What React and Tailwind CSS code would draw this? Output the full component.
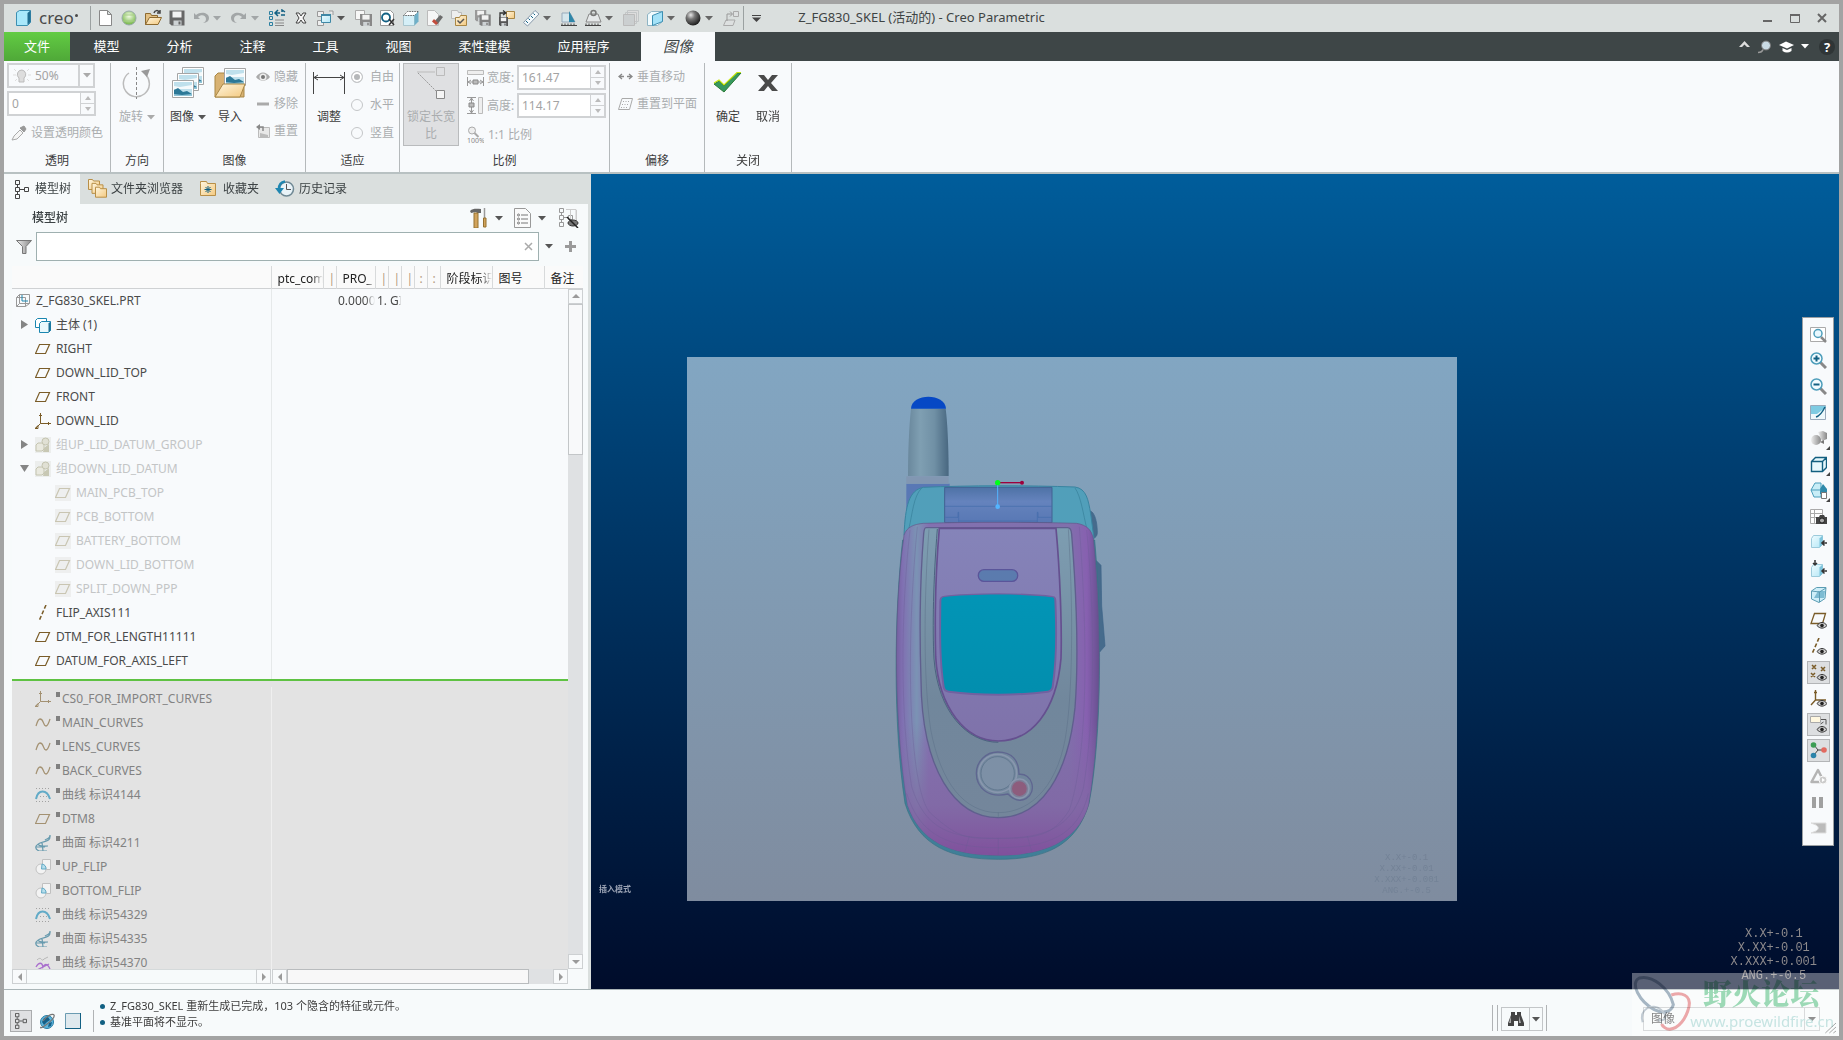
import React, { useState } from "react";

/* ---------- small shared pieces ---------- */

const Svg = ({ w = 18, h = 18, box, children, className = "" }) => (
  <svg width={w} height={h} viewBox={box || `0 0 ${w} ${h}`} fill="none" className={`shrink-0 ${className}`} aria-hidden="true">
    {children}
  </svg>
);

const Caret = ({ color = "#555" }) => (
  <Svg w={8} h={5}><path d="M0 0h8L4 4.500z" fill={color} /></Svg>
);

const Arrow = ({ dir = "up", color = "#9a9a9a" }) => {
  const d = {
    up: "M0 6h8L4 2z",
    down: "M0 2h8L4 6z",
    left: "M6 0v8L2 4z",
    right: "M2 0v8l4-4z",
  }[dir];
  return <Svg w={8} h={8}><path d={d} fill={color} /></Svg>;
};

const Defs = () => (
  <svg width="0" height="0" className="absolute" aria-hidden="true">
    <defs>
      <linearGradient id="ice" x1="0" y1="0" x2="1" y2="1"><stop stopColor="#effcff" /><stop offset="1" stopColor="#b3e6f6" /></linearGradient>
      <linearGradient id="fold" x1="0" y1="0" x2="1" y2="1"><stop stopColor="#fff6df" /><stop offset="1" stopColor="#f3c980" /></linearGradient>
      <radialGradient id="ball" cx=".35" cy=".3" r=".7"><stop stopColor="#e8e8e8" /><stop offset=".4" stopColor="#777" /><stop offset="1" stopColor="#222" /></radialGradient>
      <radialGradient id="green" cx=".5" cy=".35" r=".6"><stop stopColor="#f4fbe8" /><stop offset="1" stopColor="#79b94c" /></radialGradient>
      <linearGradient id="grey" x1="0" y1="0" x2="1" y2="0"><stop stopColor="#eee" /><stop offset="1" stopColor="#888" /></linearGradient>
    </defs>
  </svg>
);

/* ---------- quick access bar icons ---------- */

const Floppy = ({ x = 0, y = 0, s = 1, c = "#666" }) => (
  <g transform={`translate(${x} ${y}) scale(${s})`}>
    <path d="M0 0h15v15H2l-2-2z" fill={c} />
    <path d="M3 1h9v6H3z" fill="#f2f2f2" />
    <path d="M4 10h8v5H4z" fill="#cdd2d4" />
    <path d="M9 11h2v3H9z" fill={c} />
  </g>
);

const quick = {
  new: <path d="M3.500 1.500h8l4 4v11h-12zM11.500 1.500v4h4" fill="#fff" stroke="#888" />,
  online: <><circle cx="9" cy="9" r="7" fill="url(#green)" stroke="#9aa" /><path d="M3 6h12M3 12h12" stroke="#a7cf86" /></>,
  open: <><path d="M1.500 15.500v-11h5l1 2h6v9z" fill="#e2c084" stroke="#8d6a30" /><path d="M1.500 15.500l4-7h12l-3.500 7z" fill="url(#fold)" stroke="#8d6a30" /><path d="M10 4c1-3 4-3 5-1M16 1v3h-3" stroke="#444" strokeWidth="1.500" /></>,
  save: <Floppy x={1.500} y={1.500} />,
  undo: <path d="M2 4v6h6L6 8c3-3 8-2 8 2 0 2-1 3-3 4 4-.5 6-2 6-5 0-5-8-7-13-3z" fill="#a2a6a7" />,
  redo: <path d="M16 4v6h-6l2-2C9 5 4 6 4 10c0 2 1 3 3 4-4-.5-6-2-6-5 0-5 8-7 13-3z" fill="#a2a6a7" />,
  regen: <><path d="M1.500 2.500h3v3h-3zM1.500 7.500h3v3h-3zM1.500 13.500h3v3h-3z" stroke="#2a7fa0" /><path d="M7 11h9M7 14h9M7 16.500h9" stroke="#888" /><path d="M7 4h5M10 1L7 4l3 3M17 6h-4M14 3V1l3 2" stroke="#126083" strokeWidth="1.500" /></>,
  close: <path d="M4 4h3l2 3 2-3h3l-3 5 3 5h-3l-2-3-2 3H4l3-5z" fill="#f5f5f5" stroke="#444" />,
  windows: <><path d="M1.500 2.500h6v5h-6zM1.500 11.500h6v5h-6zM13 2h4v4" stroke="#999" fill="#eee" /><path d="M5.500 5.500h9v8h-9z" fill="url(#ice)" stroke="#3f88a6" /><path d="M5 5h10v2H5z" fill="#3f88a6" /></>,
  saveas: <><path d="M1.500 1.500h9v9h-9z" fill="#f7f7f7" stroke="#aaa" /><Floppy x={6} y={5} s={0.8} c="#888" /></>,
  find: <><path d="M2.500 1.500h10l3 3v12h-13z" fill="#fff" stroke="#999" /><circle cx="8" cy="8.500" r="4" stroke="#126083" strokeWidth="1.800" /><path d="M11 10l5 6M16 10l-5 6" stroke="#333" strokeWidth="1.500" /></>,
  erase3d: <><path d="M1.500 6.500h11v10h-11z" fill="#d5eff7" stroke="#a9c6cf" /><path d="M1.500 6.500l4-4h11l-4 4z" fill="#fff" stroke="#666" strokeDasharray="1.500 1" /><path d="M12.500 6.500v10l4-4v-10z" fill="#6fb0c8" /></>,
  eraser: <><path d="M1.500 1.500h7l4 4v11h-11z" fill="#f6f6f6" stroke="#bbb" /><path d="M8 13l6-7 3 2-6 8z" fill="#6b6b6b" /><path d="M6 12.500l4 3.500 2-2-4-4z" fill="#c24c3c" /></>,
  check: <><path d="M1.500 1.500h6l1 2h3v6h-10z" fill="#eee" stroke="#bbb" /><path d="M5.500 8.500h4l1-2h6v10h-11z" fill="url(#fold)" stroke="#a98745" /><path d="M7.500 11.500l2.500 2.500 4-4" stroke="#555" strokeWidth="1.500" /></>,
  copies: <><Floppy x={1} y={1} s={0.75} c="#999" /><Floppy x={5.500} y={5.500} s={0.75} c="#808080" /></>,
  backup: <><path d="M8.500 2.500h8v7h-8z" fill="url(#fold)" stroke="#a98745" /><Floppy x={1} y={8} s={0.6} c="#555" /><path d="M2 8V4h5M5 1.500L8 4 5 6" stroke="#333" strokeWidth="1.300" /></>,
  ruler: <><path d="M1.500 13.500L13 1.500l4 3.500L5.500 17z" fill="#f5fafc" stroke="#89a" /><path d="M4 12l2 2M6.500 9.500l1.500 1.500M9 7l2 2M11.500 4.500L13 6" stroke="#126083" /></>,
  angle: <><path d="M2 4h8l5 9H2z" fill="#d5e6ec" stroke="#9ab" /><path d="M9 2l6 11H9z" fill="#2f86a8" /><path d="M1 16.500h16M2 14.500v2M5 14.500v2M8 14.500v2M11 14.500v2M14 14.500v2" stroke="#444" /></>,
  mass: <><path d="M2 13L5 5h9l3 8z" fill="#e5e8e9" stroke="#888" /><circle cx="9.500" cy="4" r="2.500" stroke="#777" strokeWidth="1.500" /><path d="M1 16.500h16M2 14.500v2M5 14.500v2M8 14.500v2M11 14.500v2M14 14.500v2" stroke="#444" /></>,
  pics: <><path d="M5.500 1.500h11v11h-11zM3.500 3.500h11v11h-11z" fill="#ddd" stroke="#c2c6c7" /><path d="M1.500 5.500h11v11h-11z" fill="#cbcfd0" stroke="#bbb" /></>,
  cube: <><path d="M1.500 5.500l4-3h11v10l-5 4h-10z" fill="#f1fbfe" stroke="#8fb4c4" /><path d="M6.500 6.500l10-4v10l-10 4z" fill="#a4e2f8" stroke="#3d8fb2" /></>,
  shade: <circle cx="9" cy="9" r="7.500" fill="url(#ball)" />,
  move: <><path d="M11.500 2.500h5v5h-5zM4 11h9l-2 5.500H1.500z" fill="#dde0e0" stroke="#aaa" /><path d="M5 12V5h5M8 2.500L10.500 5 8 7.500" stroke="#999" /></>,
};

const quickBar = [
  ["new", "新建"], ["online", "在线"], ["open", "打开"], ["save", "保存"], ["undo", "撤消", "#a2a6a7"], ["redo", "重做", "#a2a6a7"],
  ["regen", "重新生成"], ["close", "关闭"], ["windows", "窗口", "#555"], ["saveas", "另存为"], ["find", "查找"], ["erase3d", "拭除"],
  ["eraser", "拭除未显示"], ["check", "检查"], ["copies", "副本"], ["backup", "备份"], ["ruler", "测量", "#666"], ["angle", "角度"],
  ["mass", "质量属性", "#666"], ["pics", "图片"], ["cube", "视图", "#666"], ["shade", "外观", "#666"], ["move", "移动"],
];

const TitleBar = () => (
  <header className="grid h-7 grid-cols-[1fr_auto_1fr] items-center bg-[#dadfde]">
    <div className="flex h-full items-center">
      <div className="flex w-[86px] items-center gap-2 pl-3">
        <Svg w={15} h={16}><path d="M.5 2.500l3-2h11v12l-3 3H.5z" fill="#a9e8fb" stroke="#3d8fb2" /><path d="M11.500 3v12l3-3V.5z" fill="#1f6d90" /></Svg>
        <span className="flex text-[17px] leading-6 text-[#4a4a4a]">creo<span className="mt-2 ml-px h-[3px] w-[3px] rounded-full bg-[#4a4a4a]" /></span>
      </div>
      <span className="mr-[2px] h-6 w-px bg-[#9ba1a1]" />
      {quickBar.map(([id, label, caret]) => (
        <React.Fragment key={id}>
          <button aria-label={label} className="flex h-6 w-6 items-center justify-center"><Svg>{quick[id]}</Svg></button>
          {caret && <button aria-label={`${label}选项`} className="flex h-6 w-[14px] items-center"><Caret color={caret} /></button>}
        </React.Fragment>
      ))}
      <span className="h-6 w-px bg-[#9ba1a1]" />
      <button aria-label="自定义" className="ml-2 flex h-6 items-center"><Svg w={9} h={7}><path d="M0 .5h9" stroke="#444" /><path d="M0 2.500h9L4.500 7z" fill="#444" /></Svg></button>
    </div>
    <h1 className="whitespace-nowrap text-[13px] text-[#3e4444]">Z_FG830_SKEL (活动的) - Creo Parametric</h1>
    <div className="flex items-center justify-end gap-[17px] pr-3">
      <button aria-label="最小化"><Svg w={10} h={10}><path d="M0 8h9" stroke="#666" strokeWidth="2" /></Svg></button>
      <button aria-label="最大化"><Svg w={10} h={10}><path d="M.5 1.500h9v8h-9z" stroke="#666" /><path d="M0 2h10" stroke="#666" strokeWidth="2" /></Svg></button>
      <button aria-label="关闭"><Svg w={10} h={10}><path d="M1 1l8 8M9 1L1 9" stroke="#666" strokeWidth="2" /></Svg></button>
    </div>
  </header>
);

const MenuBar = () => (
  <nav className="flex h-[29px] bg-[#3e4647] text-[13px] text-white">
    <button className="w-[66px] bg-gradient-to-b from-[#62cc43] to-[#4fa838]">文件</button>
    {["模型", "分析", "注释", "工具", "视图"].map((t) => <button key={t} className="w-[73px]">{t}</button>)}
    {["柔性建模", "应用程序"].map((t) => <button key={t} className="w-[99px]">{t}</button>)}
    <button className="ml-2 w-[74px] bg-[#f8fafc] text-[15px] italic text-[#3e4647]">图像</button>
    <div className="ml-auto flex items-center gap-[6px] pr-1">
      <button aria-label="折叠功能区"><Svg w={11} h={7} className="mb-1"><path d="M0 6h3l2.500-2.500L8 6h3L5.500 0z" fill="#ddd" /></Svg></button>
      <button aria-label="搜索"><Svg w={17} h={16}><circle cx="10" cy="6.500" r="4.500" fill="#c9dbe5" stroke="#777" /><path d="M7 10.500c-1 3-3 3-5 3" stroke="#999" strokeWidth="1.500" /></Svg></button>
      <button aria-label="学习"><Svg w={16} h={14}><path d="M0 5l7-3.500L15 5 8 8.500z" fill="#fff" /><path d="M3.500 8v3c3 2 6 2 9 0V8L8 10z" fill="#fff" /></Svg></button>
      <button aria-label="学习选项"><Caret color="#fff" /></button>
      <button aria-label="帮助" className="ml-1 w-4 rounded-full bg-[#2f3536] text-center text-[13px] font-bold leading-4">?</button>
    </div>
  </nav>
);

/* ---------- ribbon ---------- */

const Group = ({ label, className, children }) => (
  <section className={`flex flex-col border-r border-[#b5b9bb] ${className}`}>
    <div className="flex flex-1 items-start">{children}</div>
    <div className="h-[21px] text-center text-xs leading-5 text-[#3c3c3c]">{label}</div>
  </section>
);

const Spin = ({ id, value, label }) => (
  <div className="flex h-[25px] w-[89px] border-2 border-[#d0d2d4] bg-white">
    <input id={id} aria-label={label} defaultValue={value} disabled className="min-w-0 flex-1 px-[3px] text-xs text-[#a3a3a3]" />
    <div className="flex w-[14px] flex-col divide-y divide-[#d0d2d4] border-l border-[#d0d2d4] bg-[#f8fafc]">
      <button aria-label="增大" className="flex flex-1 items-center justify-center"><Svg w={6} h={4}><path d="M0 4h6L3 0z" fill="#bbb" /></Svg></button>
      <button aria-label="减小" className="flex flex-1 items-center justify-center"><Svg w={6} h={4}><path d="M0 0h6L3 4z" fill="#bbb" /></Svg></button>
    </div>
  </div>
);

const SmallButton = ({ icon, children }) => (
  <button className="flex h-[27px] items-center gap-1 whitespace-nowrap text-xs text-[#aaadaf]">{icon}{children}</button>
);

const BigButton = ({ icon, children, muted, caret }) => (
  <button className={`flex flex-col items-center text-xs ${muted ? "text-[#aaadaf]" : "text-[#3c3c3c]"}`}>
    <span className="flex h-[40px] w-[36px] items-center justify-center">{icon}</span>
    <span className="flex items-center gap-1 pt-1 leading-5">{children}{caret && <Caret color={muted ? "#aaa" : "#555"} />}</span>
  </button>
);

const Photo = ({ x, y }) => (
  <g transform={`translate(${x} ${y})`}>
    <path d="M.5.5h21v17H.5z" fill="#fff" stroke="#a5a5a5" />
    <path d="M2 2h18v14H2z" fill="#bfe0ec" />
    <path d="M2 6l6 1 12-2v4H2z" fill="#f5fafc" />
    <path d="M2 10l4-2 5 4 4-1 5 3v2H2z" fill="#2c7897" />
    <path d="M2 14l8 1 10-1v2H2z" fill="#8fc3d6" />
  </g>
);

const Ribbon = () => {
  const [fit, setFit] = useState("自由");
  return (
    <div className="flex h-[113px] border-b-2 border-[#b8c1c2] bg-[#f8fafc] pt-[2px]">
      <Group label="透明" className="w-[107px]">
        <div className="flex flex-col gap-[3px] pl-[3px]">
          <div className="relative flex h-[25px] w-[88px] items-center border-2 border-[#d0d2d4]">
            <Svg w={18} h={18} className="ml-1"><path d="M9 3a4.500 4.500 0 0 0-3 8v4h5v-4a4.500 4.500 0 0 0-2-8z" fill="#ddd" stroke="#bbb" /><path d="M1 2l2 2M16 2l-2 2M0 8h3M15 8h3M2 14l2-2M16 14l-2-2" stroke="#ddd" /></Svg>
            <select aria-label="透明度" disabled className="h-full flex-1 appearance-none pl-1 text-xs text-[#a3a3a3] opacity-100"><option>50%</option></select>
            <span className="pointer-events-none absolute right-0 flex h-full w-[15px] items-center justify-center border-l-2 border-[#d0d2d4]"><Caret color="#aaa" /></span>
          </div>
          <Spin value="0" label="旋转角度" />
          <SmallButton icon={<Svg w={16} h={16} className="ml-1"><path d="M1 15l2-4 6-6 3 3-6 6z" fill="#f5f5f5" stroke="#aaa" /><path d="M9 3l4 4 2-3-2-3z" fill="#999" stroke="#999" /></Svg>}>设置透明颜色</SmallButton>
        </div>
      </Group>
      <Group label="方向" className="w-[53px]">
        <div className="flex flex-1 justify-center">
          <BigButton muted caret icon={<Svg w={30} h={32}><path d="M7 6a13 13 0 1 0 17 2" stroke="#bbb" strokeWidth="1.500" /><path d="M14.500 0v32" stroke="#888" strokeDasharray="3 2" /><path d="M19 4l9-2-3 8z" fill="#999" /></Svg>}>旋转</BigButton>
        </div>
      </Group>
      <Group label="图像" className="w-[142px]">
        <div className="ml-[6px] flex gap-[6px]">
          <BigButton caret icon={<Svg w={32} h={32}><Photo x={10} y={0} /><Photo x={5} y={6} /><Photo x={0} y={13} /></Svg>}>图像</BigButton>
          <BigButton icon={<Svg w={32} h={32}><path d="M1 30V9l3-3h6l2 4h18v20z" fill="#d8b273" stroke="#a98745" /><Photo x={10} y={1} /><path d="M1 30l8-13h22l-5 13z" fill="url(#fold)" stroke="#a98745" /></Svg>}>导入</BigButton>
        </div>
        <div className="ml-2 flex flex-col">
          <SmallButton icon={<Svg w={14} h={14}><path d="M0 7c4-6 10-6 14 0-4 5-10 5-14 0z" fill="#aaa" /><circle cx="7" cy="7" r="3.500" fill="#eee" /><circle cx="7" cy="7" r="2" fill="#777" /></Svg>}>隐藏</SmallButton>
          <SmallButton icon={<Svg w={14} h={14}><path d="M1 7h12" stroke="#aaa" strokeWidth="3" /></Svg>}>移除</SmallButton>
          <SmallButton icon={<Svg w={14} h={14}><path d="M2.500 3.500h11v10h-11z" fill="#e8e8e8" stroke="#bbb" /><path d="M4 9l8 2v2H4z" fill="#bbb" /><path d="M0 3l4-3v6z" fill="#888" /><path d="M3 3h4v4" stroke="#888" strokeWidth="1.500" /></Svg>}>重置</SmallButton>
        </div>
      </Group>
      <Group label="适应" className="w-[94px]">
        <div className="ml-[5px]">
          <BigButton icon={<Svg w={34} h={24}><path d="M1.500 1v22M32.500 1v22M2 6.500h30M6 4L2 6.500 6 9M28 4l4 2.500L28 9" stroke="#444" /></Svg>}>调整</BigButton>
        </div>
        <fieldset className="ml-1 flex flex-col">
          {["自由", "水平", "竖直"].map((t) => (
            <label key={t} className="flex h-[28px] items-center gap-[7px] text-xs text-[#aaadaf]">
              <input type="radio" name="fit" checked={fit === t} onChange={() => setFit(t)} className="h-3 w-3 appearance-none rounded-full border border-[#c4c6c8] checked:bg-[#b5b7b9] checked:shadow-[inset_0_0_0_2px_white]" />
              {t}
            </label>
          ))}
        </fieldset>
      </Group>
      <Group label="比例" className="w-[210px]">
        <button aria-pressed="true" className="ml-[3px] flex h-[83px] w-[56px] flex-col items-center border border-[#b9bbbd] bg-[#dfe0e2] text-xs leading-[17px] text-[#aaadaf]">
          <Svg w={30} h={34} className="mt-[3px] mb-[7px]"><path d="M1 5h18" stroke="#bbb" /><path d="M2 6l18 18" stroke="#999" strokeDasharray="2 1" /><path d="M20.500.5h8v8h-8z" stroke="#bbb" /><path d="M20.500 23.500h8v8h-8z" fill="#f5f5f5" stroke="#888" /></Svg>
          锁定长宽比
        </button>
        <div className="ml-2 flex flex-col gap-[3px] pt-[2px] text-xs whitespace-nowrap text-[#aaadaf]">
          <div className="flex h-[25px] items-center gap-[3px]">
            <Svg w={17} h={17}><path d="M.5 1.500h16v4H.5z" fill="#eee" stroke="#bbb" /><path d="M.5 8v9M16.500 8v9M1 13h15M4 11l-3 2 3 2M13 11l3 2-3 2" stroke="#999" /><path d="M6 11h5v4H6z" fill="#bbb" stroke="#888" /></Svg>
            <label htmlFor="width" className="w-[27px]">宽度:</label>
            <Spin id="width" label="宽度" value="161.47" />
          </div>
          <div className="flex h-[25px] items-center gap-[3px]">
            <Svg w={17} h={17}><path d="M11.500.5h4v16h-4z" fill="#eee" stroke="#bbb" /><path d="M0 .5h9M0 16.500h9M4.500 1v15M2.500 4l2-3 2 3M2.500 13l2 3 2-3" stroke="#999" /><path d="M2 6h5v4H2z" fill="#bbb" stroke="#888" /></Svg>
            <label htmlFor="height" className="w-[27px]">高度:</label>
            <Spin id="height" label="高度" value="114.17" />
          </div>
          <SmallButton icon={<Svg w={17} h={18}><circle cx="5" cy="4.500" r="3.500" fill="#eee" stroke="#aaa" /><path d="M7.500 7l4 4" stroke="#aaa" strokeWidth="2" /><text x="0" y="17" fontSize="7" fill="#888">100%</text></Svg>}>1:1 比例</SmallButton>
        </div>
      </Group>
      <Group label="偏移" className="w-[95px]">
        <div className="ml-2 flex flex-col">
          <SmallButton icon={<Svg w={15} h={14}><path d="M1 6.500h5M9 6.500h5M4 4L1 6.500 4 9M11 4l3 2.500L11 9" stroke="#888" strokeWidth="1.300" /></Svg>}>垂直移动</SmallButton>
          <SmallButton icon={<Svg w={15} h={14}><path d="M4 1.500h10.500l-3 11H.5z" stroke="#aaa" /><path d="M5 4.500h7M4 7.500h7M3 10.500h7" stroke="#aaa" strokeDasharray="1 1.500" /></Svg>}>重置到平面</SmallButton>
        </div>
      </Group>
      <Group label="关闭" className="w-[87px]">
        <div className="ml-[5px] flex gap-1">
          <BigButton icon={<Svg w={30} h={22}><path d="M1 12l5-3 5 5L24 1h4L11 20z" fill="#37985f" stroke="#2a7a35" /><path d="M1 11l5-3 5 5L24 .5h4" stroke="#c5e60f" strokeWidth="1.200" /></Svg>}>确定</BigButton>
          <BigButton icon={<Svg w={20} h={16}><path d="M0 0h6l4 5 4-5h6l-7 8 7 8h-6l-4-5-4 5H0l7-8z" fill="#4a4a4a" /></Svg>}>取消</BigButton>
        </div>
      </Group>
    </div>
  );
};

/* ---------- model tree ---------- */

const Plane = ({ c = "#7a5c28" }) => <path d="M4.500 3.500h10l-4 9h-10z" stroke={c} strokeWidth="1.200" />;

const treeIcons = {
  part: <><path d="M.5 4.500h9v9h-9zM3.500 1.500h10v9h-10zM.5 4.500l3-3M9.500 13.500l4-3M.5 13.500l3-3" stroke="#999" /><path d="M6 2v6h6" stroke="#1a86b0" /></>,
  body: <><path d="M.5 3.500l2-2h9v9h-11z" fill="#fff" stroke="#1a86b0" /><path d="M4.500 6.500l2-2h9v9l-2 2h-9z" fill="#e9f9fd" stroke="#1a86b0" /><path d="M13.500 6.500v9l2-2v-9z" fill="#1a6f94" /></>,
  plane: <Plane />,
  csys: <><path d="M5.500 0v10.500H16M5.500 10.500L1 15" stroke="#7a5c28" /><path d="M4 2.500h3M13.500 9v3M0 15.500h3v-3z" stroke="#7a5c28" /></>,
  group: <><path d="M0 0h16v16H0z" fill="#eceeed" /><path d="M1 8l2-2h6v6l-2 2H1z" fill="#e9e9df" stroke="#c4c4b0" /><circle cx="10.500" cy="4.500" r="3.500" fill="#e0e0d4" stroke="#c4c4b0" /><path d="M8 15l1-4 5-4v8z" fill="#c8c8b4" /></>,
  hidden: <><path d="M0 0h16v16H0z" fill="#eeefef" /><Plane c="#c9c5b2" /></>,
  axis: <path d="M11 0L4 16" stroke="#7a5c28" strokeWidth="1.500" strokeDasharray="4 2" />,
  wave: <path d="M1 11C2 8 3 4 5 4c4 0 3 7 6 7 2 0 3-4 4-7" stroke="#7a5c28" strokeWidth="1.300" />,
  curve: <><path d="M1 12C3 2 12 2 15 12" stroke="#0d86b5" strokeWidth="2" /><path d="M1 1.500h14M1 14.500h14M5 9.500h7" stroke="#777" strokeDasharray="1 2" /></>,
  surface: <><path d="M15 0c1 7-6 6-10 8-6 3-5 6-1 8h8M3 9c1 3 6 2 10 2M1 12h9M7 7l1 9M15 0c0 4-4 4-5 5" stroke="#156a8b" strokeWidth="1.200" /></>,
  flip: <><path d="M7.500.5h8v10h-8z" fill="#fff" stroke="#aaa" /><circle cx="6" cy="10" r="5" fill="#fff" stroke="#aaa" /><path d="M7 5a5 5 0 0 1 4 5H6.500z" fill="#9adcf2" stroke="#0d86b5" /></>,
  sketch: <><path d="M2 5c5-5 4 3 7-1l4-2" stroke="#999" /><path d="M1 12c3-5 6-5 7 0 2-4 5-3 7 2M2 15l12-6" stroke="#8424c0" strokeWidth="1.300" /></>,
};

const activeRows = [
  { icon: "part", name: "Z_FG830_SKEL.PRT", root: true },
  { icon: "body", name: "主体 (1)", toggle: "right" },
  { icon: "plane", name: "RIGHT" },
  { icon: "plane", name: "DOWN_LID_TOP" },
  { icon: "plane", name: "FRONT" },
  { icon: "csys", name: "DOWN_LID" },
  { icon: "group", name: "组UP_LID_DATUM_GROUP", toggle: "right", dim: true },
  { icon: "group", name: "组DOWN_LID_DATUM", toggle: "down", dim: true },
  { icon: "hidden", name: "MAIN_PCB_TOP", child: true, dim: true },
  { icon: "hidden", name: "PCB_BOTTOM", child: true, dim: true },
  { icon: "hidden", name: "BATTERY_BOTTOM", child: true, dim: true },
  { icon: "hidden", name: "DOWN_LID_BOTTOM", child: true, dim: true },
  { icon: "hidden", name: "SPLIT_DOWN_PPP", child: true, dim: true },
  { icon: "axis", name: "FLIP_AXIS111" },
  { icon: "plane", name: "DTM_FOR_LENGTH11111" },
  { icon: "plane", name: "DATUM_FOR_AXIS_LEFT" },
];

const suppressedRows = [
  ["csys", "CS0_FOR_IMPORT_CURVES"],
  ["wave", "MAIN_CURVES"],
  ["wave", "LENS_CURVES"],
  ["wave", "BACK_CURVES"],
  ["curve", "曲线 标识4144"],
  ["plane", "DTM8"],
  ["surface", "曲面 标识4211"],
  ["flip", "UP_FLIP"],
  ["flip", "BOTTOM_FLIP"],
  ["curve", "曲线 标识54329"],
  ["surface", "曲面 标识54335"],
  ["sketch", "曲线 标识54370"],
];

const Cols = () => (
  <colgroup>
    <col className="w-[259px]" /><col className="w-[52px]" /><col className="w-[13px]" /><col className="w-[39px]" />
    <col className="w-[13px]" /><col className="w-[13px]" /><col className="w-[13px]" /><col className="w-[13px]" /><col className="w-[13px]" />
    <col className="w-[52px]" /><col className="w-[52px]" /><col />
  </colgroup>
);

const Fade = ({ children }) => (
  <div className="overflow-hidden whitespace-nowrap [mask-image:linear-gradient(to_right,black_75%,transparent)]">{children}</div>
);

const ScrollButton = ({ dir, className = "" }) => (
  <button aria-label={`滚动 ${dir}`} className={`flex h-[15px] w-[15px] shrink-0 items-center justify-center border border-[#cdd0d2] bg-[#f8fafb] ${className}`}><Arrow dir={dir} /></button>
);

const FolderIcon = ({ star }) => star ? (
  <Svg w={18} h={18}><path d="M1.500 3.500v-2h6l1 2h8v12h-15z" fill="url(#fold)" stroke="#b88f47" /><path d="M9 6v7M5.500 9.500h7M6.500 7l5 5M11.500 7l-5 5" stroke="#126083" /></Svg>
) : (
  <Svg w={20} h={20}>{[0, 3.5, 7].map((o) => <path key={o} transform={`translate(${o} ${o * 1.1})`} d="M.5 10.500v-10h4l1 1.500h6v8.500z" fill="url(#fold)" stroke="#b88f47" />)}</Svg>
);

const TreeGlyph = ({ c = "#444" }) => <path d="M1.500.5h4v4h-4zM1.500 7.500h4v4h-4zM1.500 14.500h4v4h-4zM10.500 7.500h4v4h-4zM3.500 5v2M3.500 12v2M6 9.500h4" stroke={c} />;

const ModelTree = () => {
  const [query, setQuery] = useState("");
  const heads = ["ptc_com", "|", "PRO_", "|", "|", "|", ":", ":", "阶段标识", "图号", "备注"];
  return (
    <aside className="flex w-[587px] shrink-0 flex-col border-r-[3px] border-[#dadfde] bg-[#f7fafb]">
      <div className="flex h-[30px] items-center bg-[#dadfde] text-xs text-[#3c4244]">
        <button className="flex h-full w-[76px] items-center gap-[5px] bg-[#f7fafb] pl-[10px]"><Svg w={16} h={19}><TreeGlyph /></Svg>模型树</button>
        <button className="ml-2 flex items-center gap-[3px]"><FolderIcon />文件夹浏览器</button>
        <button className="ml-[16px] flex items-center gap-[6px]"><FolderIcon star />收藏夹</button>
        <button className="ml-[16px] flex items-center gap-[4px]">
          <Svg w={20} h={18}><circle cx="11.500" cy="9" r="7" fill="#e9f3f8" stroke="#6f8894" strokeWidth="1.500" /><path d="M11.500 4v5.500H16" stroke="#555" /><path d="M0 8h9l-4.500 6z" fill="#1f86b0" /><path d="M4 9c0-4 2-7 6-7.500" stroke="#1f86b0" strokeWidth="2.500" /></Svg>历史记录
        </button>
      </div>
      <div className="flex h-[28px] items-center pr-[9px] pl-7 text-xs text-[#3c4244]">
        <h2 className="font-medium">模型树</h2>
        <div className="ml-auto flex items-center">
          <button aria-label="设置"><Svg w={18} h={20}><path d="M0 3c3-3 7-2 11-2v4H7L6 4 1 5z" fill="#666" /><path d="M4 5h4v15H4z" fill="#d1a35c" stroke="#94702f" /><path d="M14.500 0v10" stroke="#999" strokeWidth="1.500" /><path d="M13.500 10h2.500v9h-2.500z" fill="#d1a35c" stroke="#94702f" /></Svg></button>
          <button aria-label="设置选项" className="mx-[7px]"><Caret /></button>
          <button aria-label="显示" className="ml-1"><Svg w={17} h={20}><path d="M.5.5h11l5 5v14H.5z" fill="#fafafa" stroke="#999" /><path d="M7 7h7M7 11h7M7 15h7" stroke="#777" /><circle cx="4.500" cy="7" r="1" stroke="#777" /><circle cx="4.500" cy="11" r="1" stroke="#777" /><circle cx="4.500" cy="15" r="1" stroke="#777" /></Svg></button>
          <button aria-label="显示选项" className="mr-3 ml-[7px]"><Caret /></button>
          <button aria-label="树列"><Svg w={21} h={20}><TreeGlyph c="#999" /><path d="M8 1.500h10v10M12.500 2v9M18.500 2v16" stroke="#ccc" /><ellipse cx="15" cy="15" rx="5" ry="3" fill="#777" stroke="#333" /><path d="M9 9l11 11" stroke="#222" strokeWidth="1.500" /></Svg></button>
        </div>
      </div>
      <div className="flex h-[29px] items-center pl-3">
        <Svg w={16} h={16} className="mr-1"><path d="M.5 1.500h15L10 7.500v7H6.500v-7z" fill="url(#grey)" stroke="#777" /></Svg>
        <div className="flex h-[29px] flex-1 items-center border border-[#9fb0b0] bg-white pr-[5px]">
          <input aria-label="过滤模型树" value={query} onChange={(e) => setQuery(e.target.value)} className="h-full min-w-0 flex-1 px-1 text-xs outline-none" />
          <button aria-label="清除" onClick={() => setQuery("")}><Svg w={9} h={9}><path d="M1 1l7 7M8 1L1 8" stroke="#aaa" strokeWidth="1.500" /></Svg></button>
        </div>
        <button aria-label="过滤选项" className="ml-[6px]"><Caret /></button>
        <button aria-label="添加" className="mr-3 ml-3"><Svg w={11} h={11}><path d="M5.500 0v11M0 5.500h11" stroke="#9a9a9a" strokeWidth="3" /></Svg></button>
      </div>

      <div className="mt-[5px] mr-[5px] mb-[5px] ml-2 flex min-h-0 flex-1 flex-col text-xs">
        <table className="w-full table-fixed border-collapse bg-[#fafafa]">
          <Cols />
          <thead>
            <tr className="h-[22px] border-b border-[#cfd1d3] text-left text-[#222]">
              <th aria-label="名称" />
              {heads.map((h, i) => (
                <th key={i} className={`border-l border-[#d8dadb] pt-1 font-normal ${h.length === 1 ? "pl-[5px] text-[#b59a80]" : "pl-[6px]"}`}>
                  {h.length > 2 ? <Fade>{h}</Fade> : <div className="whitespace-nowrap">{h}</div>}
                </th>
              ))}
            </tr>
          </thead>
        </table>
        <div className="flex min-h-0 flex-1">
          <div className="min-w-0 flex-1 overflow-hidden bg-[#e3e3e3]">
            <table className="w-full table-fixed border-collapse">
              <Cols />
              <tbody className="bg-[#f8fafc] text-[#4a4a4a]">
                {activeRows.map((row) => (
                  <tr key={row.name} className="h-6">
                    <td className="p-0">
                      <div className={`flex h-6 items-center ${row.root ? "gap-1 pl-1" : row.child ? "gap-[5px] pl-[43px]" : "gap-[5px] pl-[7px]"} ${row.dim ? "text-[#c3c5c6]" : ""}`}>
                        {!row.root && !row.child && <span className="w-[11px]">{row.toggle && <Svg w={9} h={9} className="ml-px"><path d={row.toggle === "right" ? "M1 0v9l7-4.500z" : "M0 1h9l-4.500 7z"} fill="#858585" /></Svg>}</span>}
                        <Svg w={16} h={16}>{treeIcons[row.icon]}</Svg>
                        {row.name}
                      </div>
                    </td>
                    <td className="border-l border-[#e6e9ea] p-0" />
                    <td className="p-0" />
                    <td className="p-0 pl-[2px]">{row.root && <Fade>0.00001</Fade>}</td>
                    <td className="p-0 pl-[2px]">{row.root && <Fade>1.</Fade>}</td>
                    <td className="p-0 pl-[2px]">{row.root && <Fade>GI</Fade>}</td>
                    <td colSpan={6} />
                  </tr>
                ))}
                <tr className="h-[7px]"><td className="p-0" /><td colSpan={11} className="border-l border-[#e6e9ea] p-0" /></tr>
              </tbody>
              <tbody className="bg-[#e3e3e3] text-[#828282]">
                <tr className="h-[7px] border-t-2 border-[#5fc243]"><td className="p-0" /><td colSpan={11} className="p-0" /></tr>
                {suppressedRows.map(([icon, name]) => (
                  <tr key={name} className="h-6">
                    <td className="p-0">
                      <div className="flex h-6 items-center pl-[23px]">
                        <Svg w={16} h={16} className="opacity-60">{treeIcons[icon]}</Svg>
                        <span className="mr-[2px] mb-2 ml-[5px] h-[5px] w-1 bg-[#808080]" />
                        {name}
                      </div>
                    </td>
                    <td colSpan={11} className="border-l border-[#efefef] p-0" />
                  </tr>
                ))}
              </tbody>
            </table>
          </div>
          <div className="flex w-[15px] flex-col bg-[#dfe1e3]">
            <ScrollButton dir="up" />
            <div className="h-[151px] border border-[#c3c6c8] bg-[#f8f9fa]" />
            <ScrollButton dir="down" className="mt-auto" />
          </div>
        </div>
        <div className="flex h-[15px] pr-[15px]">
          <div className="flex w-[259px] border-y border-[#d5dadb]">
            <ScrollButton dir="left" className="-my-px" />
            <div className="flex-1" />
            <ScrollButton dir="right" className="-my-px" />
          </div>
          <div className="ml-px flex flex-1 bg-[#dfe1e3]">
            <ScrollButton dir="left" />
            <div className="w-[242px] border border-[#b9bcbe] bg-[#f8f8f8]" />
            <ScrollButton dir="right" className="ml-auto" />
          </div>
        </div>
      </div>
    </aside>
  );
};

/* ---------- graphics window ---------- */

const Phone = () => (
  <svg viewBox="0 0 840 1470" width="280" height="490" fill="none" className="absolute top-[23px] left-[173px]" aria-label="phone">
    <defs>
      <linearGradient id="ant" x1="0" y1="0" x2="1" y2="0"><stop stopColor="#6a889d" /><stop offset=".3" stopColor="#7f9fb2" /><stop offset=".65" stopColor="#7090a5" /><stop offset="1" stopColor="#486780" /></linearGradient>
      <linearGradient id="shell" x1="0" y1="0" x2="1" y2="0"><stop stopColor="#7560a0" /><stop offset=".03" stopColor="#8070b2" /><stop offset=".1" stopColor="#7b93b4" /><stop offset=".16" stopColor="#8371b0" /><stop offset=".85" stopColor="#8070ac" /><stop offset=".94" stopColor="#8760b0" /><stop offset="1" stopColor="#67508f" /></linearGradient>
      <linearGradient id="low" x1="0" y1="0" x2="0" y2="1"><stop offset=".6" stopColor="#8168a4" stopOpacity="0" /><stop offset=".85" stopColor="#8168a4" stopOpacity=".8" /><stop offset="1" stopColor="#80509c" /></linearGradient>
      <linearGradient id="rim" x1="0" y1="0" x2="0" y2="1"><stop stopColor="#7d9db1" /><stop offset=".6" stopColor="#71879c" /><stop offset="1" stopColor="#74869b" /></linearGradient>
      <linearGradient id="front" x1="0" y1="0" x2="0" y2="1"><stop stopColor="#8584b9" /><stop offset="1" stopColor="#7f72aa" /></linearGradient>
      <linearGradient id="hinge" x1="0" y1="0" x2="0" y2="1"><stop stopColor="#4e72a6" /><stop offset=".4" stopColor="#6583bd" /><stop offset="1" stopColor="#5878b4" /></linearGradient>
      <linearGradient id="lens" x1="0" y1="0" x2="0" y2="1"><stop stopColor="#0295b6" /><stop offset="1" stopColor="#028eae" /></linearGradient>
    </defs>
    <path d="M139 311h130v20l-80 60h-50z" fill="#5978b5" />
    <path d="M139 289h127v22H139z" fill="#8297b2" />
    <path d="M153 86h104c6 45 9 130 9 202H144c0-70 3-150 9-202z" fill="url(#ant)" />
    <path d="M153 86c1-48 103-48 105 0z" fill="#0648c5" />
    <path d="M688 392c18 2 24 40 24 65 0 15-10 20-20 16zM709 542l14 14 2 122 10 120-16 18-14-200z" fill="#466b8c" stroke="#3d6488" strokeWidth="2" />
    <path d="M190 322c130-6 320-6 455-1 35 5 40 40 47 80l10 75-570-10c4-90 15-135 58-144z" fill="#519fba" stroke="#3984a0" strokeWidth="3" />
    <path d="M128 480c-25 220-30 550 7 790 40 130 140 168 280 168s235-40 272-168c40-200 38-560 17-790z" fill="#3f7f98" stroke="#377184" strokeWidth="2" />
    <path d="M185 324c-25 25-28 80-38 120M645 324c18 25 25 80 35 120" stroke="#377f98" strokeWidth="2" />
    <path d="M254 322h322v106H254z" fill="url(#hinge)" stroke="#426292" strokeWidth="3" />
    <path d="M254 379h322M256 412h38v-15h2v29M574 412h-40v-15h-2v29M296 423h236" stroke="#426baa" strokeWidth="2" />
    <path d="M132 466c8-26 30-33 58-36 140-4 320-4 460 0 30 5 45 20 50 46 25 240 25 570-15 800-30 100-120 150-270 150s-236-45-272-150c-40-230-45-560-11-810z" fill="url(#shell)" stroke="#625688" strokeWidth="2" />
    <path d="M132 466c8-26 30-33 58-36 140-4 320-4 460 0 30 5 45 20 50 46 25 240 25 570-15 800-30 100-120 150-270 150s-236-45-272-150c-40-230-45-560-11-810z" fill="url(#low)" />
    <path d="M150 450c-28 250-30 560 5 770 40 130 120 155 260 155s220-30 255-150c35-210 35-520 10-775M172 440c-40 420-20 800 40 860 90 80 110 75 203 75M658 440c30 400 20 700-30 850-50 80-100 85-213 85M328 1368l-14 50M502 1368l14 50M415 1376v50M140 1240c40 130 130 163 275 163s240-33 270-163" stroke="#6b5c96" strokeWidth="1.500" opacity=".7" />
    <path d="M198 443h425c8 0 11 6 12 20 15 190 20 390 10 520-20 200-100 330-230 330S185 1170 183 900c-5-150-3-300 8-438 1-12 2-19 7-19z" fill="url(#rim)" stroke="#605f8e" strokeWidth="4" />
    <path d="M207 448c-15 200-18 450 5 600 30 160 100 250 203 250s185-90 205-250c20-150 18-400 5-600M415 1297v16" stroke="#5d7088" strokeWidth="1.500" />
    <path d="M238 445h350c12 130 18 300 15 390-14 160-90 248-188 248S236 985 227 830c-3-120 0-260 11-385z" fill="url(#front)" stroke="#65508f" strokeWidth="5" />
    <path d="M232 447c-12 150-15 300-10 390 12 160 100 250 193 250" stroke="#4c6380" strokeWidth="3" />
    <rect x="355" y="569" width="118" height="35" rx="17" fill="#5b7bae" stroke="#5a559a" strokeWidth="4" />
    <path d="M250 654c80-11 250-11 327 0 4 0 6 4 6 9 4 90 5 170-8 258-1 6-6 10-12 11-90 12-206 12-296 0-8-1-12-5-13-11-13-90-11-165-10-256 0-6 2-10 6-11z" fill="url(#lens)" stroke="#7161a0" strokeWidth="12" />
    <path d="M250 652c80-11 250-11 327 0 4 0 6 4 6 9 4 90 5 170-8 260-1 6-6 10-12 11-90 12-206 12-296 0-8-1-12-5-13-11-13-90-11-165-10-258 0-6 2-10 6-11z" fill="url(#lens)" />
    <path d="M413 1116c45 0 64 28 64 67 40-4 55 52 22 72-22 13-40 3-55-13-60 14-95-20-95-62 0-35 29-64 64-64z" fill="#71869c" stroke="#5f6690" strokeWidth="4" />
    <circle cx="413" cy="1180" r="57" fill="#73889e" stroke="#8997ae" strokeWidth="5" />
    <circle cx="413" cy="1180" r="50" fill="#7d90a6" stroke="#586e87" strokeWidth="2" />
    <circle cx="478" cy="1226" r="29" fill="#7d7f98" stroke="#8997ae" strokeWidth="5" />
    <circle cx="478" cy="1226" r="22" fill="#8d5d7d" />
    <path d="M413 308h73" stroke="#9d003c" strokeWidth="4" /><circle cx="486" cy="308" r="6" fill="#9d003c" />
    <path d="M413 308v72" stroke="#54b5ff" strokeWidth="3" /><circle cx="413" cy="380" r="7" fill="#54b5ff" />
    <circle cx="413" cy="308" r="8" fill="#00ff1a" />
  </svg>
);

const Eye = ({ x = 7, y = 10 }) => <g transform={`translate(${x} ${y})`}><path d="M0 3.500c3-4 7-4 10 0-3 3.500-7 3.500-10 0z" fill="#ccc" stroke="#333" /><circle cx="5" cy="3.500" r="1.800" fill="#222" /></g>;
const Lens = ({ children }) => <><path d="M10 10l6 6" stroke="#888" strokeWidth="3" /><circle cx="6.500" cy="6.500" r="5.500" fill="#f1fbff" stroke="#4d9dba" strokeWidth="1.500" />{children}</>;
const IceCube = () => <><path d="M1.500 4.500l2-3h9v9l-3 3h-8z" fill="url(#ice)" stroke="#9ccadb" /><path d="M9.500 4.500v9l3-3v-9z" fill="#7cc3dc" /></>;

const viewTools = [
  ["重新调整", <><path d="M.5 1.500h15v14H.5z" fill="#fff" stroke="#aaa" /><path d="M11 11l5 5" stroke="#888" strokeWidth="2.500" /><circle cx="8" cy="7.500" r="4" fill="#e9f8fe" stroke="#4d9dba" strokeWidth="1.500" /></>],
  ["放大", <Lens><path d="M3.500 6.500h6M6.500 3.500v6" stroke="#126083" strokeWidth="2" /></Lens>],
  ["缩小", <Lens><path d="M3.500 6.500h6" stroke="#126083" strokeWidth="2" /></Lens>],
  ["重画", <><path d="M.5 1.500h15v14H.5z" fill="#f2fafc" stroke="#9ab" /><path d="M1 2h14.500v2c-4 2-6 5-8 8H1z" fill="#7ecbe2" /><path d="M1 10h6l8-6v11H1z" fill="#eef8fb" /><path d="M6 13c4-1 7-6 9-10" stroke="#126083" strokeWidth="1.500" /></>],
  ["渲染选项", <><path d="M8 2l5-1 4 2v6l-5 2z" fill="url(#grey)" /><circle cx="6" cy="10" r="5" fill="url(#grey)" /><path d="M10 12l4-2v4z" fill="#777" /></>, true],
  ["显示样式", <path d="M1.500 5.500l4-4h11v10l-4 4h-11zM1.500 5.500h11v10M12.500 5.500l4-4" fill="#e6f8fd" stroke="#125f80" strokeWidth="1.400" />, true],
  ["已保存方向", <><path d="M1 8l4-7h6v14H4z" fill="#c8edf7" stroke="#4a9dbb" /><path d="M10 7l3-5 4 5v5h-7z" fill="#2f89aa" /><path d="M1 8h10" stroke="#4a9dbb" /><path d="M11.500 10.500h5v6h-5z" fill="#fff" stroke="#777" /></>, true],
  ["视图管理器", <><path d="M.5 1.500h12v14H.5zM.5 5.500h12M.5 9.500h12M4.500 1.500v14" fill="#fff" stroke="#aaa" /><path d="M6 9h3l1-2h4l1 2h2v7H6z" fill="#444" /><circle cx="12" cy="12.500" r="2.500" fill="#aaa" stroke="#222" /></>],
  ["透视", <><IceCube /><path d="M17 9h-5M14.500 6.500L12 9l2.500 2.500" stroke="#333" strokeWidth="1.600" /></>],
  ["剖面", <><g transform="translate(0 3)"><IceCube /></g><path d="M17 11h-5M14.500 8.500L12 11l2.500 2.500M5 0v5M3 3l2 2 2-2" stroke="#333" strokeWidth="1.500" /></>],
  ["透视图", <><path d="M1.500 5l5-3.500h9.500l-1 11-6 4L1.500 13z" fill="#cdeef8" stroke="#5b9cb3" /><path d="M4 12l4-7h7l-1 7z" fill="#7dbcd3" /><path d="M1.500 5l8 1v10M9.500 6l6.500-4" stroke="#5b9cb3" /></>],
  ["平面显示", <><path d="M4.500 1.500h11l-3 10H1z" stroke="#7a5c28" strokeWidth="1.300" /><Eye /></>],
  ["轴显示", <><path d="M9 0L2 16" stroke="#7a5c28" strokeWidth="1.600" strokeDasharray="4 2" /><Eye /></>],
  ["点显示", <><path d="M2 1l4 4M6 1L2 5M11 3l4 4M15 3l-4 4M1 9l4 4M5 9l-4 4" stroke="#7a5c28" strokeWidth="1.500" /><Eye /></>, false, true],
  ["坐标系显示", <><path d="M5.500 0v10H16M5.500 10L1 15M4 2.500h3" stroke="#7a5c28" strokeWidth="1.400" /><Eye /></>],
  ["注释显示", <><path d="M.5.5h10v6H.5z" fill="#fff8e0" stroke="#aaa" /><path d="M11 3.500h5v5M13.500 6l-3 2" stroke="#555" /><Eye /></>, false, true],
  ["旋转中心", <><path d="M4 3l4 5-4 5M8 8h6" stroke="#444" /><circle cx="3.500" cy="3" r="2.800" fill="#3d9d54" /><circle cx="3.500" cy="13.500" r="2.800" fill="#2b84aa" /><circle cx="14" cy="8" r="2.800" fill="#e26a60" /></>, false, true],
  ["仿真", <><path d="M8 2l6 12H1.500z" stroke="#b4b4b4" strokeWidth="2.500" strokeLinejoin="round" /><circle cx="13" cy="12" r="4" fill="#ccc" stroke="#f8f8f8" /><path d="M12 10v4l3-2z" fill="#fff" /></>],
  ["暂停", <path d="M2 3h4v11H2zM9 3h4v11H9z" fill="#a0a0a0" />],
  ["恢复", <path d="M1 3h15v10H1l5-2c3-2 3-4 0-6z" fill="#bbb" stroke="#ddd" />],
];

const tolerances = ["X.X+-0.1", "X.XX+-0.01", "X.XXX+-0.001", "ANG.+-0.5"];

const Canvas = () => (
  <main className="relative min-w-0 flex-1 overflow-hidden bg-gradient-to-b from-[#005d9b] to-[#000c2b]">
    <div className="absolute top-[183px] left-[96px] h-[544px] w-[770px] overflow-hidden bg-gradient-to-b from-[#82a6c2] to-[#7f8c9f]">
      <Phone />
      <div className="absolute right-[18px] bottom-1 text-center font-['Liberation_Mono',monospace] text-[9px] leading-[11px] text-[#738296]">
        {tolerances.map((t) => <p key={t}>{t}</p>)}
      </div>
    </div>
    <p className="absolute bottom-[92px] left-2 text-[8px] font-bold leading-4 text-[#9aa3b4]">插入模式</p>
    <div className="absolute right-[22px] bottom-[6px] text-center font-['Liberation_Mono',monospace] text-xs leading-[14px] text-[#8d8a8c]">
      {tolerances.map((t) => <p key={t}>{t}</p>)}
    </div>
    <div role="toolbar" className="absolute top-[143px] right-[5px] flex w-8 flex-col items-center gap-[3px] border border-[#9b9fa2] bg-[#f8fafc] py-[5px]">
      {viewTools.map(([label, icon, more, on]) => (
        <button key={label} aria-label={label} className={`relative flex h-[23px] w-[23px] items-center justify-center ${on ? "border border-[#b3b5b7] bg-[#dddfe1]" : ""}`}>
          <Svg w={17} h={17}>{icon}</Svg>
          {more && <span className="absolute right-0 bottom-0"><Svg w={4} h={4}><path d="M4 0v4H0z" fill="#444" /></Svg></span>}
        </button>
      ))}
    </div>
  </main>
);

/* ---------- status bar ---------- */

const StatusBar = () => (
  <footer className="flex h-[47px] border-t border-[#aab5b7] bg-[#f7fafb] text-[#3c3c3c]">
    <div className="flex items-end pb-1 pl-[6px]">
      <button aria-label="模型树" className="flex h-[22px] w-[22px] items-center justify-center border border-[#a9abad] bg-[#dfe0e2]"><Svg w={14} h={16} box="0 0 16 19"><TreeGlyph /></Svg></button>
      <button aria-label="浏览器" className="ml-[7px] flex h-[22px] items-center"><Svg w={17} h={17}><circle cx="8" cy="9" r="6.500" fill="#5db7df" stroke="#287ca3" /><path d="M5 5l4-1 2 3-3 2-3 3-2-3zM10 10l3-1-1 4-3 1z" fill="#145f88" /><path d="M2 14C-1 18 17 6 15 2c-1-2-8 1-11 6" stroke="#777" strokeWidth="1.300" /></Svg></button>
      <button aria-label="全屏" className="ml-[9px] flex h-[22px] items-center"><Svg w={16} h={16}><path d="M.5.5h15v15H.5z" fill="#dfe9ee" stroke="#6b9cb2" /><path d="M0 15.500h15.500V0" stroke="#126083" /></Svg></button>
      <span className="ml-3 h-[22px] w-px bg-[#b0b3b5]" />
    </div>
    <ul className="flex flex-col pt-2 pl-[6px] text-[11px] leading-4">
      {["Z_FG830_SKEL 重新生成已完成，103 个隐含的特征或元件。", "基准平面将不显示。"].map((m) => (
        <li key={m} className="flex items-center gap-[5px]"><span className="h-[5px] w-[5px] rounded-full bg-[#126083]" />{m}</li>
      ))}
    </ul>
    <div className="ml-auto flex items-end gap-1 pr-[19px] pb-[5px] text-xs">
      <span className="h-[26px] w-px bg-[#b0b3b5]" />
      <span className="h-[26px] w-px bg-[#b0b3b5]" />
      <div className="-ml-px flex h-[24px] w-[42px] border border-[#c3c6c8]">
        <button aria-label="查找" className="flex w-[27px] items-center justify-center"><Svg w={16} h={16}><path d="M3 1h4v3h2V1h4v3l3 8v3h-6v-5H6v5H0v-3l3-8z" fill="#444" /><path d="M3 5l-2 7h2zM11 5v7h2z" fill="#aaa" /></Svg></button>
        <button aria-label="查找选项" className="flex flex-1 items-center justify-center border-l border-[#c3c6c8]"><Caret /></button>
      </div>
      <span className="-ml-px h-[26px] w-px bg-[#b0b3b5]" />
      <div className="relative ml-[92px] h-[24px] w-[177px] border border-[#c3c6c8]">
        <select aria-label="选择过滤器" className="h-full w-full appearance-none pl-[7px] text-[#444]"><option>图像</option></select>
        <span className="pointer-events-none absolute top-0 right-0 flex h-full w-[15px] items-center justify-center border-l border-[#c3c6c8]"><Caret /></span>
      </div>
    </div>
  </footer>
);

const Watermark = () => (
  <div className="pointer-events-none absolute right-0 bottom-0 h-[63px] w-[207px] bg-white/35">
    <svg width="206" height="63" viewBox="0 0 618 189" fill="none" className="absolute inset-0 mix-blend-multiply" aria-hidden="true">
      <path d="M124 95C112 45 60 5 22 15c-30 14 0 70 45 95 30 15 52 5 57-15z" stroke="#a9b8c6" strokeWidth="9" />
      <path d="M32 148c-12-40 30-60 55-38 25 25 10 35-10 30" stroke="#c5ced6" strokeWidth="6" />
      <path d="M118 66c30-10 60 0 53 35-8 35-30 65-58 68-12 0-22-10-24-16" stroke="#f0a9ab" strokeWidth="9" />
      <path d="M612 150l-32 30M612 162l-20 18M612 174l-8 6" stroke="#aaa" strokeWidth="3" />
    </svg>
    <p className="pt-1 pr-5 text-right font-['Noto_Serif_CJK_SC','Noto_Sans_CJK_SC',sans-serif] text-[29px] font-black leading-[32px] text-[#9fdcb8] mix-blend-multiply">野火论坛</p>
    <p className="pr-[5px] text-right text-[15px] leading-6 text-[#c6e4e2]">www.proewildfire.cn</p>
  </div>
);

export default function App() {
  return (
    <div className="relative flex h-screen min-h-[640px] flex-col overflow-hidden border-4 border-[#a3a3a3] font-['Noto_Sans','Noto_Sans_CJK_SC',sans-serif]">
      <Defs />
      <TitleBar />
      <MenuBar />
      <Ribbon />
      <div className="flex min-h-0 flex-1">
        <ModelTree />
        <Canvas />
      </div>
      <StatusBar />
      <Watermark />
    </div>
  );
}
